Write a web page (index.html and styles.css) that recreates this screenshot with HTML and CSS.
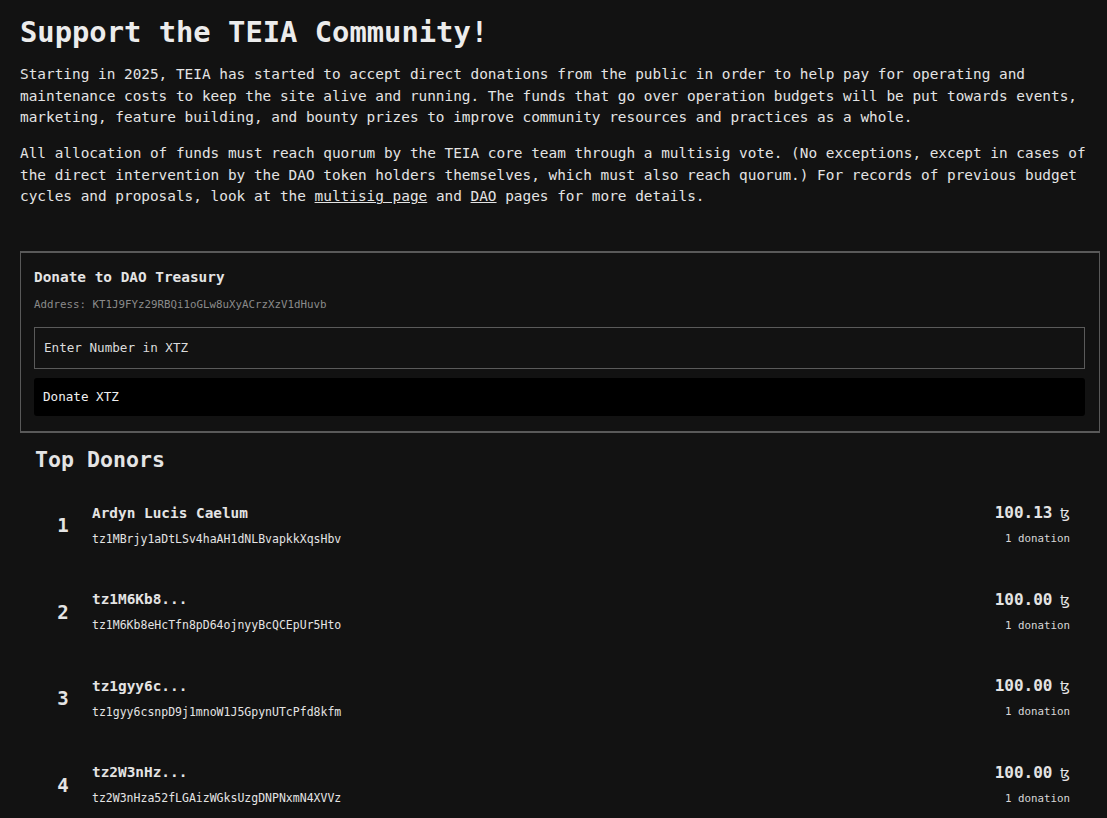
FILE: index.html
```html
<!DOCTYPE html>
<html lang="en">
<head>
<meta charset="utf-8">
<title>Support the TEIA Community!</title>
<link rel="stylesheet" href="styles.css">
</head>
<body>
<main class="page">
  <h1 class="title">Support the TEIA Community!</h1>
  <p class="text">Starting in 2025, TEIA has started to accept direct donations from the public in order to help pay for operating and maintenance costs to keep the site alive and running. The funds that go over operation budgets will be put towards events, marketing, feature building, and bounty prizes to improve community resources and practices as a whole.</p>
  <p class="text">All allocation of funds must reach quorum by the TEIA core team through a multisig vote. (No exceptions, except in cases of the direct intervention by the DAO token holders themselves, which must also reach quorum.) For records of previous budget cycles and proposals, look at the <a class="link" href="#">multisig page</a> and <a class="link" href="#">DAO</a> pages for more details.</p>

  <section class="donate">
    <h2 class="donate-title">Donate to DAO Treasury</h2>
    <div class="address">Address: KT1J9FYz29RBQi1oGLw8uXyACrzXzV1dHuvb</div>
    <input class="amount-input" type="text" placeholder="Enter Number in XTZ">
    <button class="donate-btn" type="button">Donate XTZ</button>
  </section>

  <section class="donors">
    <h2 class="donors-title">Top Donors</h2>
    <ol class="donor-list">
      <li class="donor">
        <span class="rank">1</span>
        <div class="who">
          <div class="name">Ardyn Lucis Caelum</div>
          <div class="addr">tz1MBrjy1aDtLSv4haAH1dNLBvapkkXqsHbv</div>
        </div>
        <div class="stats">
          <div class="total">100.13 <span class="tez">ꜩ</span></div>
          <div class="count">1 donation</div>
        </div>
      </li>
      <li class="donor">
        <span class="rank">2</span>
        <div class="who">
          <div class="name">tz1M6Kb8...</div>
          <div class="addr">tz1M6Kb8eHcTfn8pD64ojnyyBcQCEpUr5Hto</div>
        </div>
        <div class="stats">
          <div class="total">100.00 <span class="tez">ꜩ</span></div>
          <div class="count">1 donation</div>
        </div>
      </li>
      <li class="donor">
        <span class="rank">3</span>
        <div class="who">
          <div class="name">tz1gyy6c...</div>
          <div class="addr">tz1gyy6csnpD9j1mnoW1J5GpynUTcPfd8kfm</div>
        </div>
        <div class="stats">
          <div class="total">100.00 <span class="tez">ꜩ</span></div>
          <div class="count">1 donation</div>
        </div>
      </li>
      <li class="donor">
        <span class="rank">4</span>
        <div class="who">
          <div class="name">tz2W3nHz...</div>
          <div class="addr">tz2W3nHza52fLGAizWGksUzgDNPNxmN4XVVz</div>
        </div>
        <div class="stats">
          <div class="total">100.00 <span class="tez">ꜩ</span></div>
          <div class="count">1 donation</div>
        </div>
      </li>
    </ol>
  </section>
</main>
</body>
</html>
```

FILE: styles.css
```css
* { box-sizing: border-box; }

html, body {
  margin: 0;
  padding: 0;
  background: #121212;
  color: #e4e4e4;
  font-family: "DejaVu Sans Mono", "Liberation Mono", monospace;
  font-size: 14.4px;
}

body { overflow: hidden; }

.page {
  padding: 15px 7px 0 20px;
}

.title {
  margin: 0 0 15px;
  font-size: 28.8px;
  line-height: 34px;
  font-weight: bold;
  color: #ececec;
}

.text {
  margin: 0 0 14.4px;
  line-height: 21.6px;
  padding-right: 10px;
}

.link {
  color: inherit;
  text-decoration: underline;
}

.donate {
  margin-top: 43px;
  border-style: solid;
  border-color: #595959;
  border-width: 2px 1px;
  padding: 13px 14px 15px 13px;
  display: flex;
  flex-direction: column;
}

.donate-title {
  margin: 0;
  font-size: 14.4px;
  line-height: 22px;
  font-weight: bold;
}

.address {
  margin-top: 9px;
  font-size: 10.8px;
  line-height: 16px;
  color: #8a8a8a;
}

.amount-input {
  margin-top: 14px;
  height: 42px;
  width: 100%;
  background: #121212;
  border: 1px solid #5a5a5a;
  border-radius: 0;
  padding: 0 9px;
  font-family: inherit;
  font-size: 12.6px;
  color: #e4e4e4;
  outline: none;
}

.amount-input::placeholder {
  color: #dcdcdc;
  opacity: 1;
}

.donate-btn {
  margin-top: 9px;
  height: 38px;
  width: 100%;
  background: #000;
  border: 0;
  border-radius: 3px;
  padding: 0 9px;
  text-align: left;
  font-family: inherit;
  font-size: 12.6px;
  color: #f0f0f0;
}

.donors {
  padding: 0 15px;
}

.donors-title {
  margin: 14px 0 9px;
  font-size: 21.6px;
  line-height: 26px;
  font-weight: bold;
}

.donor-list {
  list-style: none;
  margin: 0;
  padding: 0;
}

.donor {
  display: flex;
  align-items: center;
  padding: 20.5px 14px 20px;
}

.rank {
  width: 28px;
  text-align: center;
  font-size: 19px;
  font-weight: bold;
  margin-right: 15px;
}

.who {
  flex: 1;
}

.name {
  font-size: 14.4px;
  line-height: 20px;
  font-weight: bold;
}

.addr {
  margin-top: 7px;
  font-size: 11.5px;
  line-height: 18px;
}

.stats {
  text-align: right;
}

.total {
  font-size: 16px;
  line-height: 21px;
  font-weight: bold;
  padding-right: 1px;
}

.tez {
  font-family: "DejaVu Sans", sans-serif;
  font-size: 14px;
  font-weight: normal;
  margin-left: -2px;
}

.count {
  margin-top: 6px;
  font-size: 10.8px;
  line-height: 18px;
  color: #d8d8d8;
  padding-right: 1px;
}
```
